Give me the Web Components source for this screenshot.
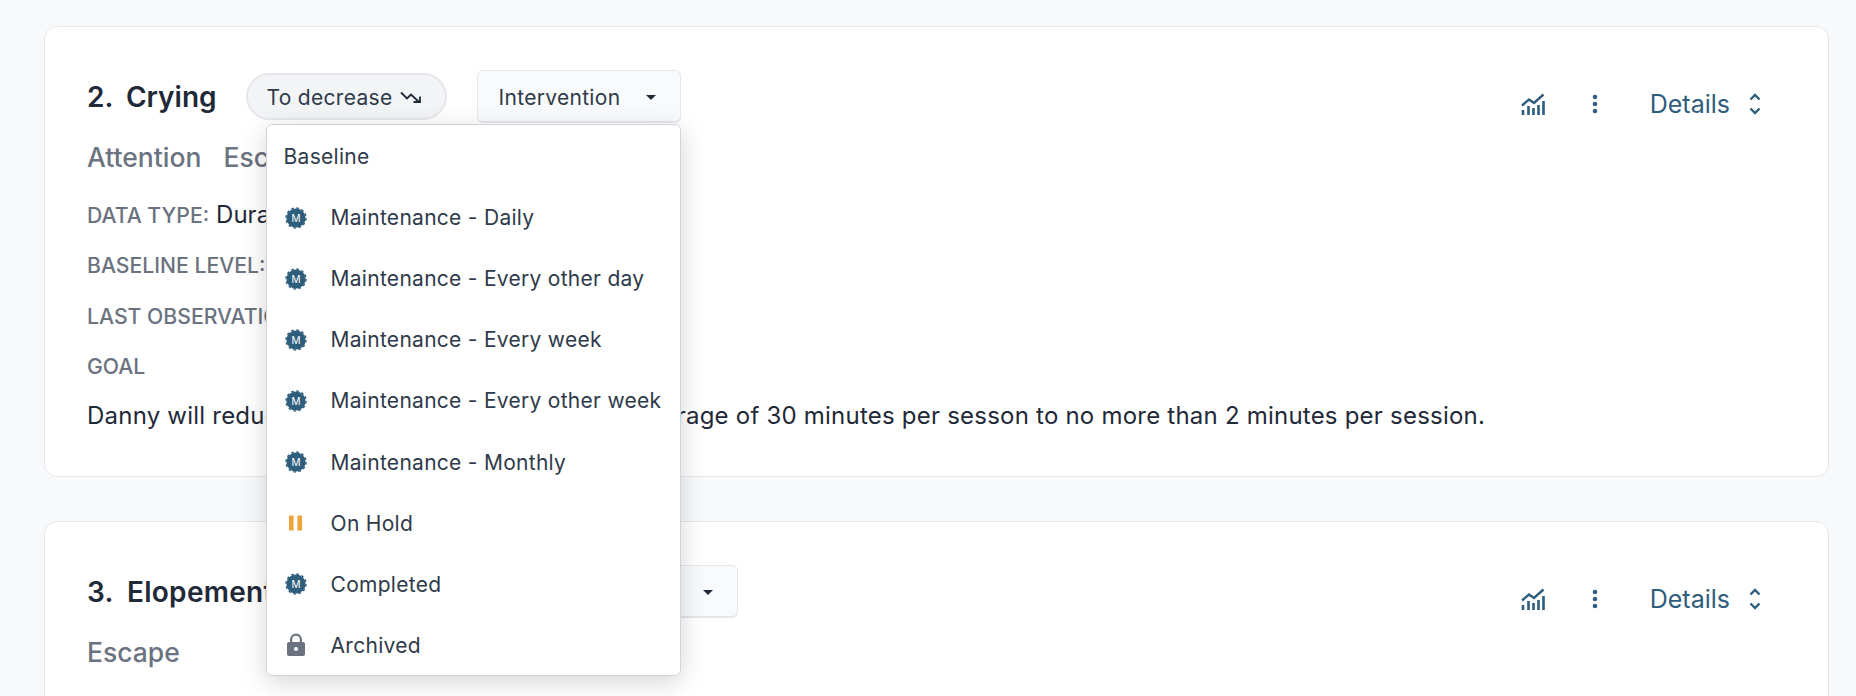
<!DOCTYPE html>
<html>
<head>
<meta charset="utf-8">
<title>Targets</title>
<style>
    html, body { margin: 0; height: 696px; overflow: hidden; }
    body {
        background: #f8f9fb;
        color: #1f2937;
        font-family: Inter, "Liberation Sans", sans-serif;
    }
    #page {
        display: flex;
        flex-direction: column;
        gap: 44px;
        padding: 26px 27px 0 44px;
    }
</style>
</head>
<body>
<div id="page">
    <goal-card number="2." name="Crying" status="Intervention">
        <status-menu slot="menu">
            <menu-entry>Baseline</menu-entry>
            <menu-entry icon="m">Maintenance - Daily</menu-entry>
            <menu-entry icon="m">Maintenance - Every other day</menu-entry>
            <menu-entry icon="m">Maintenance - Every week</menu-entry>
            <menu-entry icon="m">Maintenance - Every other week</menu-entry>
            <menu-entry icon="m">Maintenance - Monthly</menu-entry>
            <menu-entry icon="pause">On Hold</menu-entry>
            <menu-entry icon="m">Completed</menu-entry>
            <menu-entry icon="lock">Archived</menu-entry>
        </status-menu>
        <goal-tag slot="tags">Attention</goal-tag>
        <goal-tag slot="tags">Escape</goal-tag>
        <goal-field label="DATA TYPE:">Duration</goal-field>
        <goal-field label="BASELINE LEVEL:"></goal-field>
        <goal-field label="LAST OBSERVATION:"></goal-field>
        <goal-field label="GOAL"></goal-field>
        <goal-text>Danny will reduce his crying behaviors from an average of 30 minutes per sesson to no more than 2 minutes per session.</goal-text>
    </goal-card>
    <goal-card number="3." name="Elopement" status="Intervention" style="--title-track: .3px">
        <goal-tag slot="tags">Escape</goal-tag>
    </goal-card>
</div>

<script>
class GoalCard extends HTMLElement {
    constructor() {
        super()
        this.attachShadow({mode: "open"})
        this.shadowRoot.innerHTML = `
            <style>
                :host {
                    display: block;
                    box-sizing: border-box;
                    flex: none;
                    min-height: 451px;
                    padding: 43px 67px 0 42px;
                    background: #fff;
                    border: 1px solid #e5e7eb;
                    border-radius: 13px;
                }
                .top {
                    display: flex;
                    align-items: flex-start;
                }
                h2 {
                    margin: 0;
                    padding-top: 11px;
                    font-size: 28px;
                    letter-spacing: var(--title-track, 0);
                    word-spacing: -.5px;
                    line-height: 32px;
                    font-weight: 600;
                    color: #1f2937;
                    white-space: pre;
                }
                trend-pill { margin: 3px 0 0 29px; }
                status-button { margin-left: 30px; }
                card-actions { margin: 21px 0 0 auto; }
                .tags {
                    display: flex;
                    gap: 22px;
                    margin-top: 18px;
                }
                .fields {
                    display: flex;
                    flex-direction: column;
                    margin-top: 28px;
                }
            </style>
            <div class="top">
                <h2 id="title"></h2>
                <trend-pill>To decrease</trend-pill>
                <status-button id="status"><slot name="menu" slot="menu"></slot></status-button>
                <card-actions></card-actions>
            </div>
            <div class="tags"><slot name="tags"></slot></div>
            <div class="fields"><slot></slot></div>
        `
    }

    connectedCallback() {
        this.shadowRoot.getElementById("title").textContent =
            this.getAttribute("number") + "  " + this.getAttribute("name")
        this.shadowRoot.getElementById("status").setAttribute("label", this.getAttribute("status"))
    }
}

class TrendPill extends HTMLElement {
    constructor() {
        super()
        this.attachShadow({mode: "open"})
        this.shadowRoot.innerHTML = `
            <style>
                :host {
                    display: inline-flex;
                    box-sizing: border-box;
                    align-items: center;
                    flex: none;
                    gap: 8px;
                    width: 201px;
                    height: 47px;
                    padding: 1px 0 0 19px;
                    background: #f3f4f6;
                    border: 2px solid #e5e7eb;
                    border-radius: 24px;
                    font-size: 21px;
                    letter-spacing: .3px;
                    color: #2f3a4a;
                    white-space: nowrap;
                }
                svg { flex: none; }
            </style>
            <slot></slot>
            <svg width="22" height="14" viewBox="0 0 22 14" fill="none" stroke="#1f2937" stroke-width="1.8">
                <path d="M1 2.5 L7 8.5 L11 4.5 L19 12"/>
                <path d="M13.5 12 H20 V6.5"/>
            </svg>
        `
    }
}

class StatusButton extends HTMLElement {
    constructor() {
        super()
        this.attachShadow({mode: "open"})
        this.shadowRoot.innerHTML = `
            <style>
                :host {
                    display: block;
                    position: relative;
                    flex: none;
                }
                button {
                    display: flex;
                    box-sizing: border-box;
                    align-items: center;
                    width: 204px;
                    height: 53px;
                    padding: 2px 24px 0 21px;
                    background: #f9fafb;
                    border: 1px solid #e5e7eb;
                    border-bottom-width: 2px;
                    border-radius: 6px;
                    font: inherit;
                    font-size: 21px;
                    letter-spacing: .3px;
                    color: #2f3a4a;
                }
                .caret {
                    margin-left: auto;
                    border: 5px solid transparent;
                    border-top-color: #1f2937;
                    border-bottom-width: 0;
                }
            </style>
            <button><span id="label"></span><span class="caret"></span></button>
            <slot name="menu"></slot>
        `
    }

    static get observedAttributes() { return ["label"] }

    attributeChangedCallback() {
        this.shadowRoot.getElementById("label").textContent = this.getAttribute("label")
    }
}

class StatusMenu extends HTMLElement {
    constructor() {
        super()
        this.attachShadow({mode: "open"})
        this.shadowRoot.innerHTML = `
            <style>
                :host {
                    display: flex;
                    flex-direction: column;
                    box-sizing: border-box;
                    position: absolute;
                    z-index: 10;
                    top: 54px;
                    right: 0;
                    width: 415px;
                    height: 552px;
                    padding: 1px 0;
                    background: #fff;
                    border: 1px solid #d1d5db;
                    border-radius: 6px;
                    box-shadow: 0 6px 26px rgba(0, 0, 0, .17);
                }
            </style>
            <slot></slot>
        `
    }
}

class MenuEntry extends HTMLElement {
    constructor() {
        super()
        this.attachShadow({mode: "open"})
        this.shadowRoot.innerHTML = `
            <style>
                :host {
                    display: flex;
                    align-items: center;
                    flex: none;
                    height: 61.1px;
                    padding-left: 17px;
                    font-size: 21px;
                    letter-spacing: .28px;
                    color: #2f3a4a;
                    white-space: nowrap;
                }
                .icon {
                    display: flex;
                    flex: none;
                    justify-content: center;
                    width: 24px;
                    margin-right: 23px;
                }
                .icon:empty { display: none; }
                text { font: 400 10px Inter, "Liberation Sans", sans-serif; letter-spacing: 0; }
            </style>
            <span class="icon" id="icon"></span>
            <slot></slot>
        `
    }

    connectedCallback() {
        this.shadowRoot.getElementById("icon").innerHTML = MenuEntry.icons[this.getAttribute("icon")] || ""
    }
}

MenuEntry.icons = {
    m: `<svg width="24" height="24" viewBox="0 0 24 24">
            <circle cx="12" cy="12" r="9.6" fill="#2f5d7c"/>
            <circle cx="12" cy="12" r="10" fill="none" stroke="#2f5d7c" stroke-width="1.4" stroke-dasharray="2.62 2.62"/>
            <text x="12" y="15.6" text-anchor="middle" fill="#fff">M</text>
        </svg>`,
    pause: `<svg width="24" height="24" viewBox="0 0 24 24" fill="#eca43b">
            <rect x="5" y="4.5" width="4.6" height="15"/>
            <rect x="13.4" y="4.5" width="4.6" height="15"/>
        </svg>`,
    lock: `<svg width="24" height="26" viewBox="0 0 24 26" fill="#6b7280">
            <path fill-rule="evenodd" d="M6 10V7.5a6 6 0 0 1 12 0V10h1a2 2 0 0 1 2 2v10a2 2 0 0 1-2 2H5a2 2 0 0 1-2-2V12a2 2 0 0 1 2-2h1zm2.2 0h7.6V7.5a3.8 3.8 0 0 0-7.6 0V10zM12 15a2 2 0 1 0 0 4 2 2 0 0 0 0-4z"/>
        </svg>`
}

class CardActions extends HTMLElement {
    constructor() {
        super()
        this.attachShadow({mode: "open"})
        this.shadowRoot.innerHTML = `
            <style>
                :host {
                    display: flex;
                    align-items: center;
                    height: 26px;
                    font-size: 25px;
                    color: #2f5d7c;
                }
                .dots { margin-left: 47px; }
                .details { margin-left: 52px; }
                .sort { margin-left: 19px; }
            </style>
            <svg width="24" height="22" viewBox="0 0 24 22" fill="none" stroke="#2f5d7c">
                <path stroke-width="2.4" d="M1 12.5 L8 6.5 L13 10 L22.5 1.5"/>
                <path stroke-width="2.6" d="M2 17v5M7.5 13v9M12.5 15v7M17.5 12v10M22.5 8v14"/>
            </svg>
            <svg class="dots" width="6" height="20" viewBox="0 0 6 20" fill="#2f5d7c">
                <circle cx="3" cy="3" r="2.3"/>
                <circle cx="3" cy="10" r="2.3"/>
                <circle cx="3" cy="17" r="2.3"/>
            </svg>
            <span class="details">Details</span>
            <svg class="sort" width="12" height="22" viewBox="0 0 12 22" fill="none" stroke="#2f5d7c" stroke-width="2.4">
                <path d="M1.5 6.5 L6 2 L10.5 6.5"/>
                <path d="M1.5 15.5 L6 20 L10.5 15.5"/>
            </svg>
        `
    }
}

class GoalTag extends HTMLElement {
    constructor() {
        super()
        this.attachShadow({mode: "open"})
        this.shadowRoot.innerHTML = `
            <style>
                :host {
                    display: inline-block;
                    font-size: 26.5px;
                    line-height: 32px;
                    font-weight: 500;
                    color: #6b7280;
                }
            </style>
            <slot></slot>
        `
    }
}

class GoalField extends HTMLElement {
    constructor() {
        super()
        this.attachShadow({mode: "open"})
        this.shadowRoot.innerHTML = `
            <style>
                :host {
                    display: flex;
                    align-items: baseline;
                    gap: 7px;
                    height: 50.4px;
                    font-size: 24px;
                    line-height: 28px;
                    color: #1f2937;
                    white-space: nowrap;
                }
                #label {
                    font-size: 21.2px;
                    font-weight: 500;
                    color: #6b7280;
                }
            </style>
            <span id="label"></span>
            <slot></slot>
        `
    }

    connectedCallback() {
        this.shadowRoot.getElementById("label").textContent = this.getAttribute("label")
    }
}

class GoalText extends HTMLElement {
    constructor() {
        super()
        this.attachShadow({mode: "open"})
        this.shadowRoot.innerHTML = `
            <style>
                :host {
                    display: block;
                    margin-top: -1px;
                    font-size: 24px;
                    letter-spacing: .22px;
                    line-height: 28px;
                    color: #1f2937;
                    white-space: nowrap;
                }
            </style>
            <slot></slot>
        `
    }
}

customElements.define("goal-card", GoalCard)
customElements.define("trend-pill", TrendPill)
customElements.define("status-button", StatusButton)
customElements.define("status-menu", StatusMenu)
customElements.define("menu-entry", MenuEntry)
customElements.define("card-actions", CardActions)
customElements.define("goal-tag", GoalTag)
customElements.define("goal-field", GoalField)
customElements.define("goal-text", GoalText)
</script>
</body>
</html>
